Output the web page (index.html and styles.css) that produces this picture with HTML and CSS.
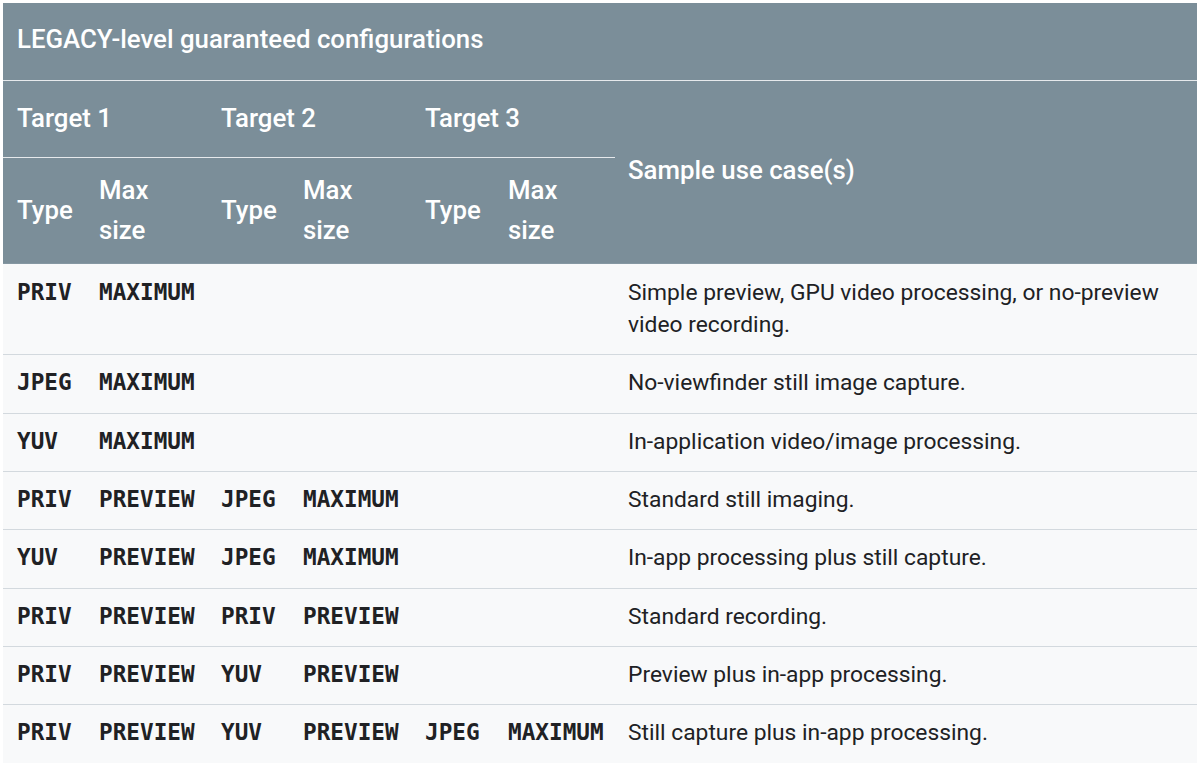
FILE: index.html
```html
<!DOCTYPE html>
<html lang="en">
<head>
<meta charset="utf-8">
<title>LEGACY-level guaranteed configurations</title>
<link rel="stylesheet" href="styles.css">
</head>
<body>
<table class="cfg">
  <colgroup>
    <col class="c-type"><col class="c-max"><col class="c-type"><col class="c-max"><col class="c-type3"><col class="c-max3"><col class="c-use">
  </colgroup>
  <thead>
    <tr><th class="title" colspan="7">LEGACY-level guaranteed configurations</th></tr>
    <tr>
      <th class="target" colspan="2">Target 1</th>
      <th class="target" colspan="2">Target 2</th>
      <th class="target" colspan="2">Target 3</th>
      <th class="use-head" rowspan="2">Sample use case(s)</th>
    </tr>
    <tr class="sub">
      <th>Type</th><th>Max<br>size</th>
      <th>Type</th><th>Max<br>size</th>
      <th>Type</th><th>Max<br>size</th>
    </tr>
  </thead>
  <tbody>
    <tr><td><code>PRIV</code></td><td><code>MAXIMUM</code></td><td></td><td></td><td></td><td></td><td class="use">Simple preview, GPU video processing, or no-preview video recording.</td></tr>
    <tr><td><code>JPEG</code></td><td><code>MAXIMUM</code></td><td></td><td></td><td></td><td></td><td class="use">No-viewfinder still image capture.</td></tr>
    <tr><td><code>YUV</code></td><td><code>MAXIMUM</code></td><td></td><td></td><td></td><td></td><td class="use">In-application video/image processing.</td></tr>
    <tr><td><code>PRIV</code></td><td><code>PREVIEW</code></td><td><code>JPEG</code></td><td><code>MAXIMUM</code></td><td></td><td></td><td class="use">Standard still imaging.</td></tr>
    <tr><td><code>YUV</code></td><td><code>PREVIEW</code></td><td><code>JPEG</code></td><td><code>MAXIMUM</code></td><td></td><td></td><td class="use">In-app processing plus still capture.</td></tr>
    <tr><td><code>PRIV</code></td><td><code>PREVIEW</code></td><td><code>PRIV</code></td><td><code>PREVIEW</code></td><td></td><td></td><td class="use">Standard recording.</td></tr>
    <tr><td><code>PRIV</code></td><td><code>PREVIEW</code></td><td><code>YUV</code></td><td><code>PREVIEW</code></td><td></td><td></td><td class="use">Preview plus in-app processing.</td></tr>
    <tr><td><code>PRIV</code></td><td><code>PREVIEW</code></td><td><code>YUV</code></td><td><code>PREVIEW</code></td><td><code>JPEG</code></td><td><code>MAXIMUM</code></td><td class="use">Still capture plus in-app processing.</td></tr>
  </tbody>
</table>
</body>
</html>
```

FILE: styles.css
```css
html, body {
  margin: 0;
  padding: 0;
  background: #ffffff;
}
body {
  padding: 3px;
  font-family: Roboto, "Noto Sans", "Liberation Sans", sans-serif;
}
.cfg {
  width: 1194px;
  table-layout: fixed;
  border-collapse: collapse;
  border-spacing: 0;
}
.c-type { width: 82px; }
.c-max { width: 122px; }
.c-type3 { width: 83px; }
.c-max3 { width: 121px; }
.c-use { width: auto; }

.cfg th {
  box-sizing: border-box;
  background: #7b8e99;
  color: #ffffff;
  font-weight: 500;
  font-size: 25.8px;
  line-height: 40px;
  text-align: left;
  padding: 0 0 4px 14px;
  vertical-align: middle;
}
.cfg th.title {
  height: 77px;
  border-bottom: 1px solid #e6e9ec;
}
.cfg th.target {
  height: 77px;
  padding-bottom: 1px;
  border-bottom: 1px solid #e6e9ec;
}
.cfg th.use-head {
  padding-left: 13px;
}
.cfg tr.sub th {
  height: 106px;
  padding-top: 12px;
  padding-bottom: 12px;
}
.cfg tbody td {
  background: #f8f9fa;
  color: #202124;
  font-size: 22.8px;
  line-height: 32px;
  padding: 12px 0 13.33px 14px;
  vertical-align: top;
  border-top: 1px solid #d3d9de;
}
.cfg tbody tr:first-child td {
  border-top: 1px solid #8597a2;
  padding-top: 13.67px;
}
.cfg td.use {
  padding-left: 13px;
  padding-right: 14px;
}
.cfg code {
  font-family: "DejaVu Sans Mono", "Liberation Mono", monospace;
  font-weight: bold;
  font-size: 22.7px;
  line-height: 1;
  color: #202124;
}
```
